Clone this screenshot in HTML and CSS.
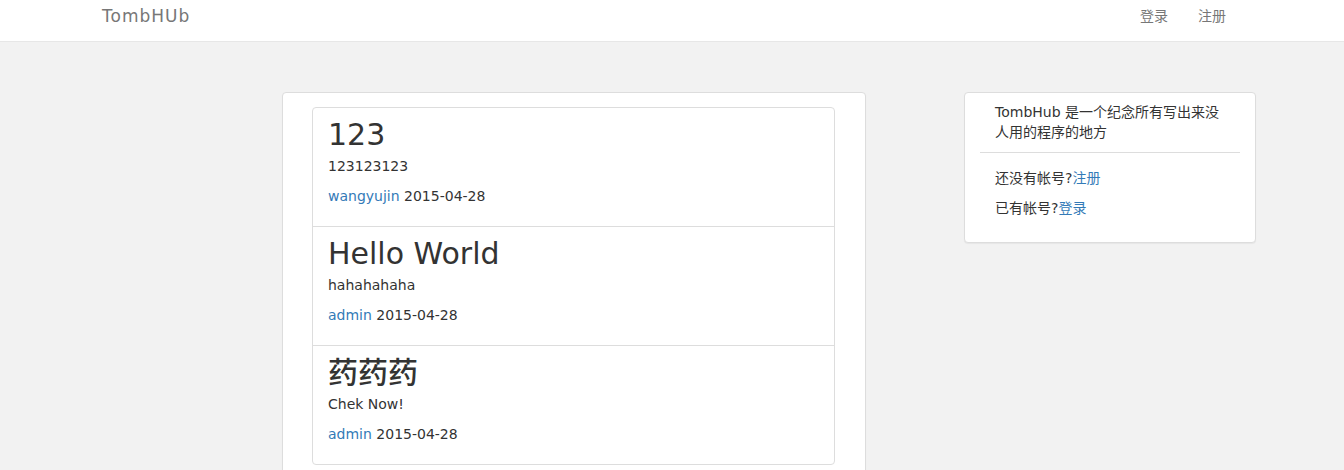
FILE: index.html
```html
<!DOCTYPE html>
<html lang="zh">
<head>
<meta charset="utf-8">
<title>TombHUb</title>
<link rel="stylesheet" href="styles.css">
</head>
<body>
<header class="navbar">
  <div class="nav-inner">
    <a class="brand" href="#">TombHUb</a>
    <ul class="nav-links">
      <li><a href="#">登录</a></li>
      <li><a href="#">注册</a></li>
    </ul>
  </div>
</header>
<main class="main">
  <section class="panel posts">
    <ul class="post-list">
      <li class="post">
        <h2 class="post-title">123</h2>
        <p class="post-body">123123123</p>
        <p class="post-meta"><a href="#">wangyujin</a> 2015-04-28</p>
      </li>
      <li class="post">
        <h2 class="post-title">Hello World</h2>
        <p class="post-body">hahahahaha</p>
        <p class="post-meta"><a href="#">admin</a> 2015-04-28</p>
      </li>
      <li class="post">
        <h2 class="post-title">药药药</h2>
        <p class="post-body">Chek Now!</p>
        <p class="post-meta"><a href="#">admin</a> 2015-04-28</p>
      </li>
    </ul>
  </section>
  <aside class="panel sidebar">
    <div class="intro">TombHub 是一个纪念所有写出来没人用的程序的地方</div>
    <hr class="divider">
    <p class="side-line">还没有帐号?<a href="#">注册</a></p>
    <p class="side-line last">已有帐号?<a href="#">登录</a></p>
  </aside>
</main>
</body>
</html>
```

FILE: styles.css
```css
* { box-sizing: border-box; }
html, body { margin: 0; padding: 0; }
body {
  background: #f2f2f2;
  color: #333;
  font-family: "DejaVu Sans", "Noto Sans CJK SC", sans-serif;
  font-size: 14px;
  line-height: 20px;
}
a { color: #337ab7; text-decoration: none; }

.navbar {
  background: #fff;
  border-bottom: 1px solid #e7e7e7;
  height: 42px;
}
.nav-inner {
  width: 1170px;
  margin: 0 auto;
  padding: 6px 31px 0 15px;
  display: flex;
  justify-content: space-between;
  align-items: flex-start;
}
.brand {
  color: #777;
  font-size: 17px;
  letter-spacing: 1px;
  line-height: 20px;
}
.nav-links {
  list-style: none;
  margin: 0;
  padding: 0;
  display: flex;
  gap: 30px;
}
.nav-links a {
  color: #777;
  font-size: 14px;
  line-height: 20px;
}

.main {
  width: 1170px;
  margin: 50px auto 0;
  padding: 0 1px 0 195px;
  display: flex;
  justify-content: space-between;
  align-items: flex-start;
}
.panel {
  background: #fff;
  border: 1px solid #ddd;
  border-radius: 4px;
  box-shadow: 0 1px 1px rgba(0,0,0,.05);
}
.posts {
  width: 584px;
  padding: 14px 30px 15px 29px;
}
.post-list {
  list-style: none;
  margin: 0;
  padding: 0;
}
.post {
  border: 1px solid #ddd;
  margin-bottom: -1px;
  padding: 10px 15px;
}
.post:first-child { border-radius: 4px 4px 0 0; }
.post:last-child { margin-bottom: 0; border-radius: 0 0 4px 4px; }
.post-title {
  margin: 0 0 5px;
  font-size: 30px;
  font-weight: 500;
  line-height: 33px;
}
.post-body, .post-meta { margin: 0 0 10px; }

.sidebar {
  width: 292px;
  padding: 9px 15px 24px;
}
.intro {
  padding: 0 15px;
  margin-bottom: 10px;
}
.divider {
  border: 0;
  border-top: 1px solid #ddd;
  margin: 0 0 15px;
}
.side-line {
  margin: 0 0 10px;
  padding: 0 15px;
}
.side-line.last { margin-bottom: 0; }
```
